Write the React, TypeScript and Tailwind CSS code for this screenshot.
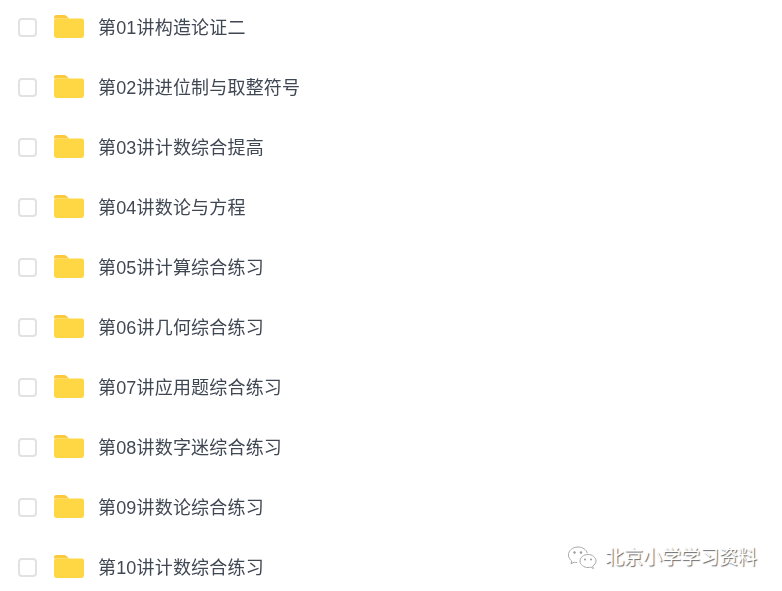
const folders = [
  '第01讲构造论证二',
  '第02讲进位制与取整符号',
  '第03讲计数综合提高',
  '第04讲数论与方程',
  '第05讲计算综合练习',
  '第06讲几何综合练习',
  '第07讲应用题综合练习',
  '第08讲数字迷综合练习',
  '第09讲数论综合练习',
  '第10讲计数综合练习',
];

function FolderIcon() {
  return (
    <svg width="30" height="23" viewBox="0 0 30 23" className="block blur-[0.4px]">
      <path d="M0 2.5A2.5 2.5 0 0 1 2.5 0h7.6c1 0 1.7.4 2.4 1l2.6 2.6H0z" fill="#fcc93a" />
      <rect x="0" y="3.400" width="30" height="19.600" rx="2.400" fill="#ffd644" />
    </svg>
  );
}

function WechatIcon() {
  return (
    <svg width="32" height="26" viewBox="0 0 32 26" fill="none" className="shrink-0 blur-[0.3px]">
      <g stroke="#a8a8a8" strokeWidth="1">
        <path d="M11 2C5.500 2 1.500 5.600 1.500 10c0 2.500 1.300 4.600 3.300 6l-.8 2.800 3.200-1.600c1 .3 2 .4 3 .4" />
        <path d="M11 2c4.600 0 8.400 2.600 9.300 6.200" />
        <path d="M21 9.500c-4.500 0-8 3-8 6.500s3.500 6.500 8 6.500c1 0 1.800-.1 2.600-.4l2.800 1.500-.7-2.500c1.800-1.200 3.300-3 3.300-5.100 0-3.500-3.500-6.500-8-6.500z" />
      </g>
      <circle cx="7.500" cy="7.500" r="1.200" fill="#9a9a9a" />
      <circle cx="14" cy="7.500" r="1.200" fill="#9a9a9a" />
      <circle cx="18" cy="14.500" r="1" fill="#9a9a9a" />
      <circle cx="24" cy="14.500" r="1" fill="#9a9a9a" />
    </svg>
  );
}

export default function App() {
  return (
    <div className="relative w-[782px] h-[591px] overflow-hidden bg-white font-['Liberation_Sans','Noto_Sans_CJK_SC',sans-serif]">
      <div className="flex flex-col -mt-[3px]">
        {folders.map(name => (
          <div key={name} className="flex items-center h-[60px] pl-[18px]">
            <span className="w-[19px] h-[19px] mt-[1px] shrink-0 rounded-[4px] border-2 border-[#e2e2e2] bg-white blur-[0.3px]" />
            <span className="ml-[17px] mb-[1px]">
              <FolderIcon />
            </span>
            <span className="ml-[14px] mt-[2px] text-[18px] leading-[24px] text-[#3f4753] tracking-[0.18px] blur-[0.4px]">
              {name}
            </span>
          </div>
        ))}
      </div>

      {/* watermark over the list */}
      <div className="absolute left-[567px] top-[545px] flex items-center gap-[6px]">
        <WechatIcon />
        <span className="text-[19px] leading-[26px] text-white [text-shadow:1px_1px_1px_#666]">
          北京小学学习资料
        </span>
      </div>
    </div>
  );
}
